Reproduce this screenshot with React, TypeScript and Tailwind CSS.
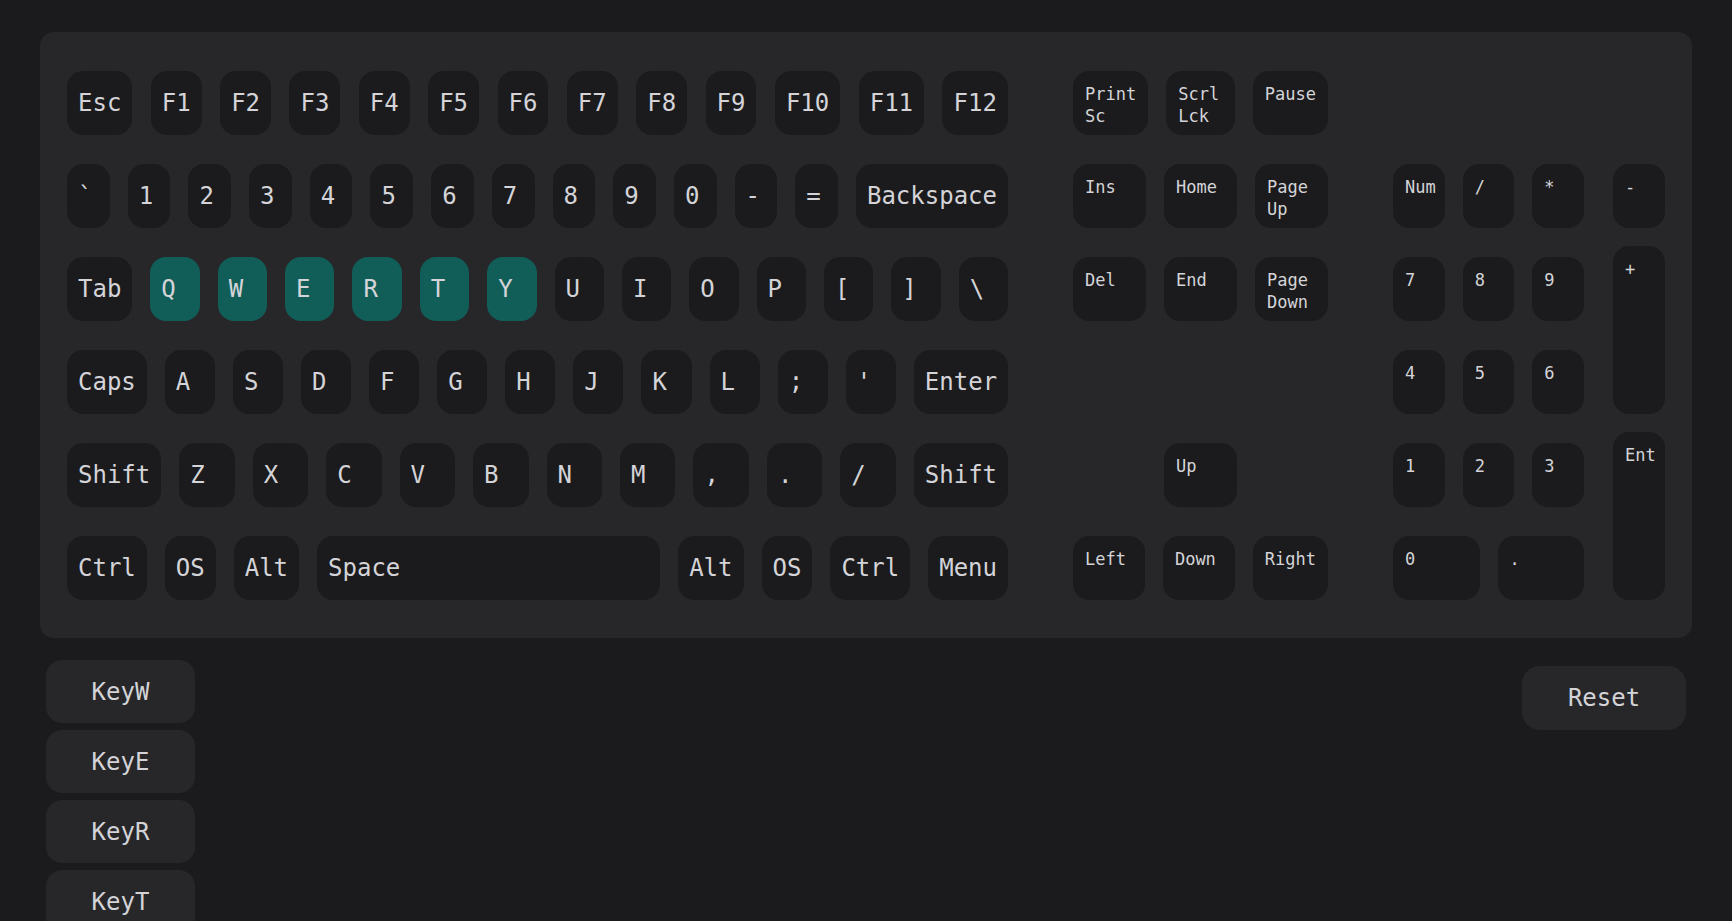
import { useState } from "react";

const mainRows: string[][] = [
  ["Esc", "F1", "F2", "F3", "F4", "F5", "F6", "F7", "F8", "F9", "F10", "F11", "F12"],
  ["`", "1", "2", "3", "4", "5", "6", "7", "8", "9", "0", "-", "=", "Backspace"],
  ["Tab", "Q", "W", "E", "R", "T", "Y", "U", "I", "O", "P", "[", "]", "\\"],
  ["Caps", "A", "S", "D", "F", "G", "H", "J", "K", "L", ";", "'", "Enter"],
  ["Shift", "Z", "X", "C", "V", "B", "N", "M", ",", ".", "/", "Shift"],
  ["Ctrl", "OS", "Alt", "Space", "Alt", "OS", "Ctrl", "Menu"],
];

// empty string = blank cell
const navRows: string[][] = [
  ["Print Sc", "Scrl Lck", "Pause"],
  ["Ins", "Home", "Page Up"],
  ["Del", "End", "Page Down"],
  [],
  ["", "Up", ""],
  ["Left", "Down", "Right"],
];

const numRows: string[][] = [
  ["Num", "/", "*"],
  ["7", "8", "9"],
  ["4", "5", "6"],
  ["1", "2", "3"],
  ["0", "."],
];

function codeFor(label: string) {
  return /^[A-Z]$/.test(label) ? `Key${label}` : label;
}

function MainKey({ label, active }: { label: string; active: boolean }) {
  const grow = label.length === 1 || label === "Space";
  return (
    <div
      className={`flex h-[64px] items-center whitespace-nowrap rounded-[16px] px-[11px] text-[24px] ${
        grow ? "min-w-0 flex-1" : "shrink-0"
      } ${active ? "bg-[#115e59]" : "bg-[#1b1b1d]"}`}
    >
      {label}
    </div>
  );
}

function SmallKey({ label, className = "" }: { label: string; className?: string }) {
  return (
    <div className={`rounded-[16px] bg-[#1b1b1d] p-[12px] text-[17px] leading-[22px] ${className}`}>{label}</div>
  );
}

export default function App() {
  const [pressed, setPressed] = useState<string[]>(["KeyW", "KeyE", "KeyR", "KeyT", "KeyY", "KeyQ"]);

  return (
    <div className="h-screen overflow-hidden bg-[#1b1b1d] px-[40px] pt-[32px] font-['DejaVu_Sans_Mono',monospace] text-[#d4d4d8]">
      <div className="flex justify-between rounded-[14px] bg-[#272729] px-[27px] pb-[38px] pt-[39px]">
        <div className="flex w-[941px] flex-col gap-[29px]">
          {mainRows.map((row, i) => (
            <div key={i} className="flex justify-between gap-[18px]">
              {row.map((label, j) => (
                <MainKey key={j} label={label} active={pressed.includes(codeFor(label))} />
              ))}
            </div>
          ))}
        </div>

        <div className="flex w-[255px] flex-col gap-[29px]">
          {navRows.map((row, i) => (
            <div key={i} className="flex h-[64px] gap-[18px]">
              {row.map((label, j) =>
                label ? (
                  <SmallKey key={j} label={label} className="flex-1" />
                ) : (
                  <div key={j} className="flex-1 px-[12px]" />
                )
              )}
            </div>
          ))}
        </div>

        <div className="flex gap-[29px] pt-[93px]">
          <div className="flex w-[191px] flex-col gap-[29px]">
            {numRows.map((row, i) => (
              <div key={i} className="flex h-[64px] gap-[18px]">
                {row.map((label, j) => (
                  <SmallKey key={j} label={label} className="w-0 flex-1" />
                ))}
              </div>
            ))}
          </div>
          <div className="flex w-[52px] flex-col gap-[18px]">
            <SmallKey label="-" className="h-[64px]" />
            <SmallKey label="+" className="flex-1" />
            <SmallKey label="Ent" className="flex-1" />
          </div>
        </div>
      </div>

      <div className="mt-[22px] flex items-start justify-between px-[6px]">
        <div className="flex flex-col gap-[7px]">
          {pressed.map((code) => (
            <div
              key={code}
              className="flex h-[63px] w-[149px] items-center justify-center rounded-[16px] bg-[#272729] text-[24px]"
            >
              {code}
            </div>
          ))}
        </div>
        <button
          type="button"
          className="mt-[6px] h-[64px] w-[164px] rounded-[18px] bg-[#272729] text-[24px]"
          onClick={() => setPressed([])}
        >
          Reset
        </button>
      </div>
    </div>
  );
}
